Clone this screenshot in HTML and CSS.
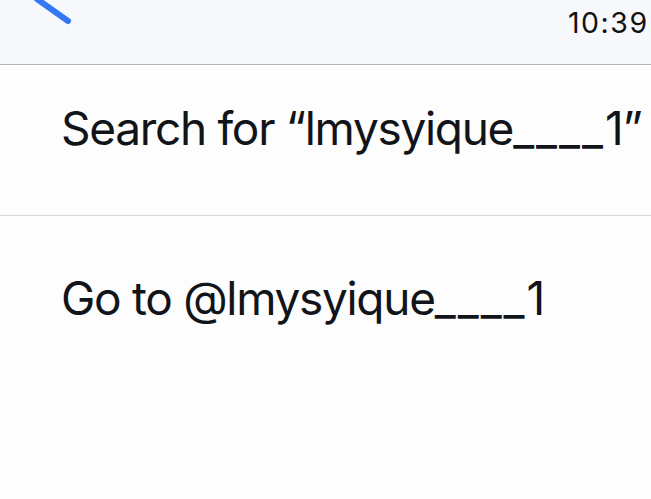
FILE: index.html
```html
<!DOCTYPE html>
<html>
<head>
<meta charset="utf-8">
<link rel="stylesheet" href="styles.css">
</head>
<body>
<header class="topbar">
  <svg class="back" width="80" height="30" viewBox="0 0 80 30">
    <line x1="37" y1="-1" x2="68" y2="21" stroke="#3478f6" stroke-width="6" stroke-linecap="round"/>
  </svg>
  <div class="time">10:39</div>
</header>
<main class="list">
  <div class="row row-search">Search for “lmysyique<span class="unders">____</span>1”</div>
  <div class="row row-goto">Go to @lmysyique<span class="unders">____</span>1</div>
</main>
</body>
</html>
```
FILE: styles.css
```css
* { box-sizing: border-box; }
html, body {
  margin: 0;
  padding: 0;
  background: #fdfdfd;
  width: 651px;
  height: 499px;
  overflow: hidden;
  font-family: Inter, "Liberation Sans", sans-serif;
  color: #111418;
}
.topbar {
  height: 65px;
  background: #f6f8fb;
  border-bottom: 1px solid #b3b3b3;
  display: flex;
  align-items: flex-start;
  overflow: hidden;
}
.back { display: block; flex: none; }
.time {
  flex: none;
  margin-left: 488px;
  font-size: 28.5px;
  line-height: 34px;
  padding-top: 6px;
  letter-spacing: 1.5px;
  white-space: nowrap;
  color: #111;
}
.list { display: flex; flex-direction: column; }
.row {
  font-size: 46px;
  line-height: 56px;
  padding-left: 61px;
  white-space: nowrap;
  letter-spacing: -1.3px;
}
.unders { letter-spacing: 2px; }
.row-search {
  padding-top: 35px;
  padding-bottom: 59px;
  border-bottom: 1px solid #d8d8dc;
}
.row-goto { padding-top: 54px; }
```
